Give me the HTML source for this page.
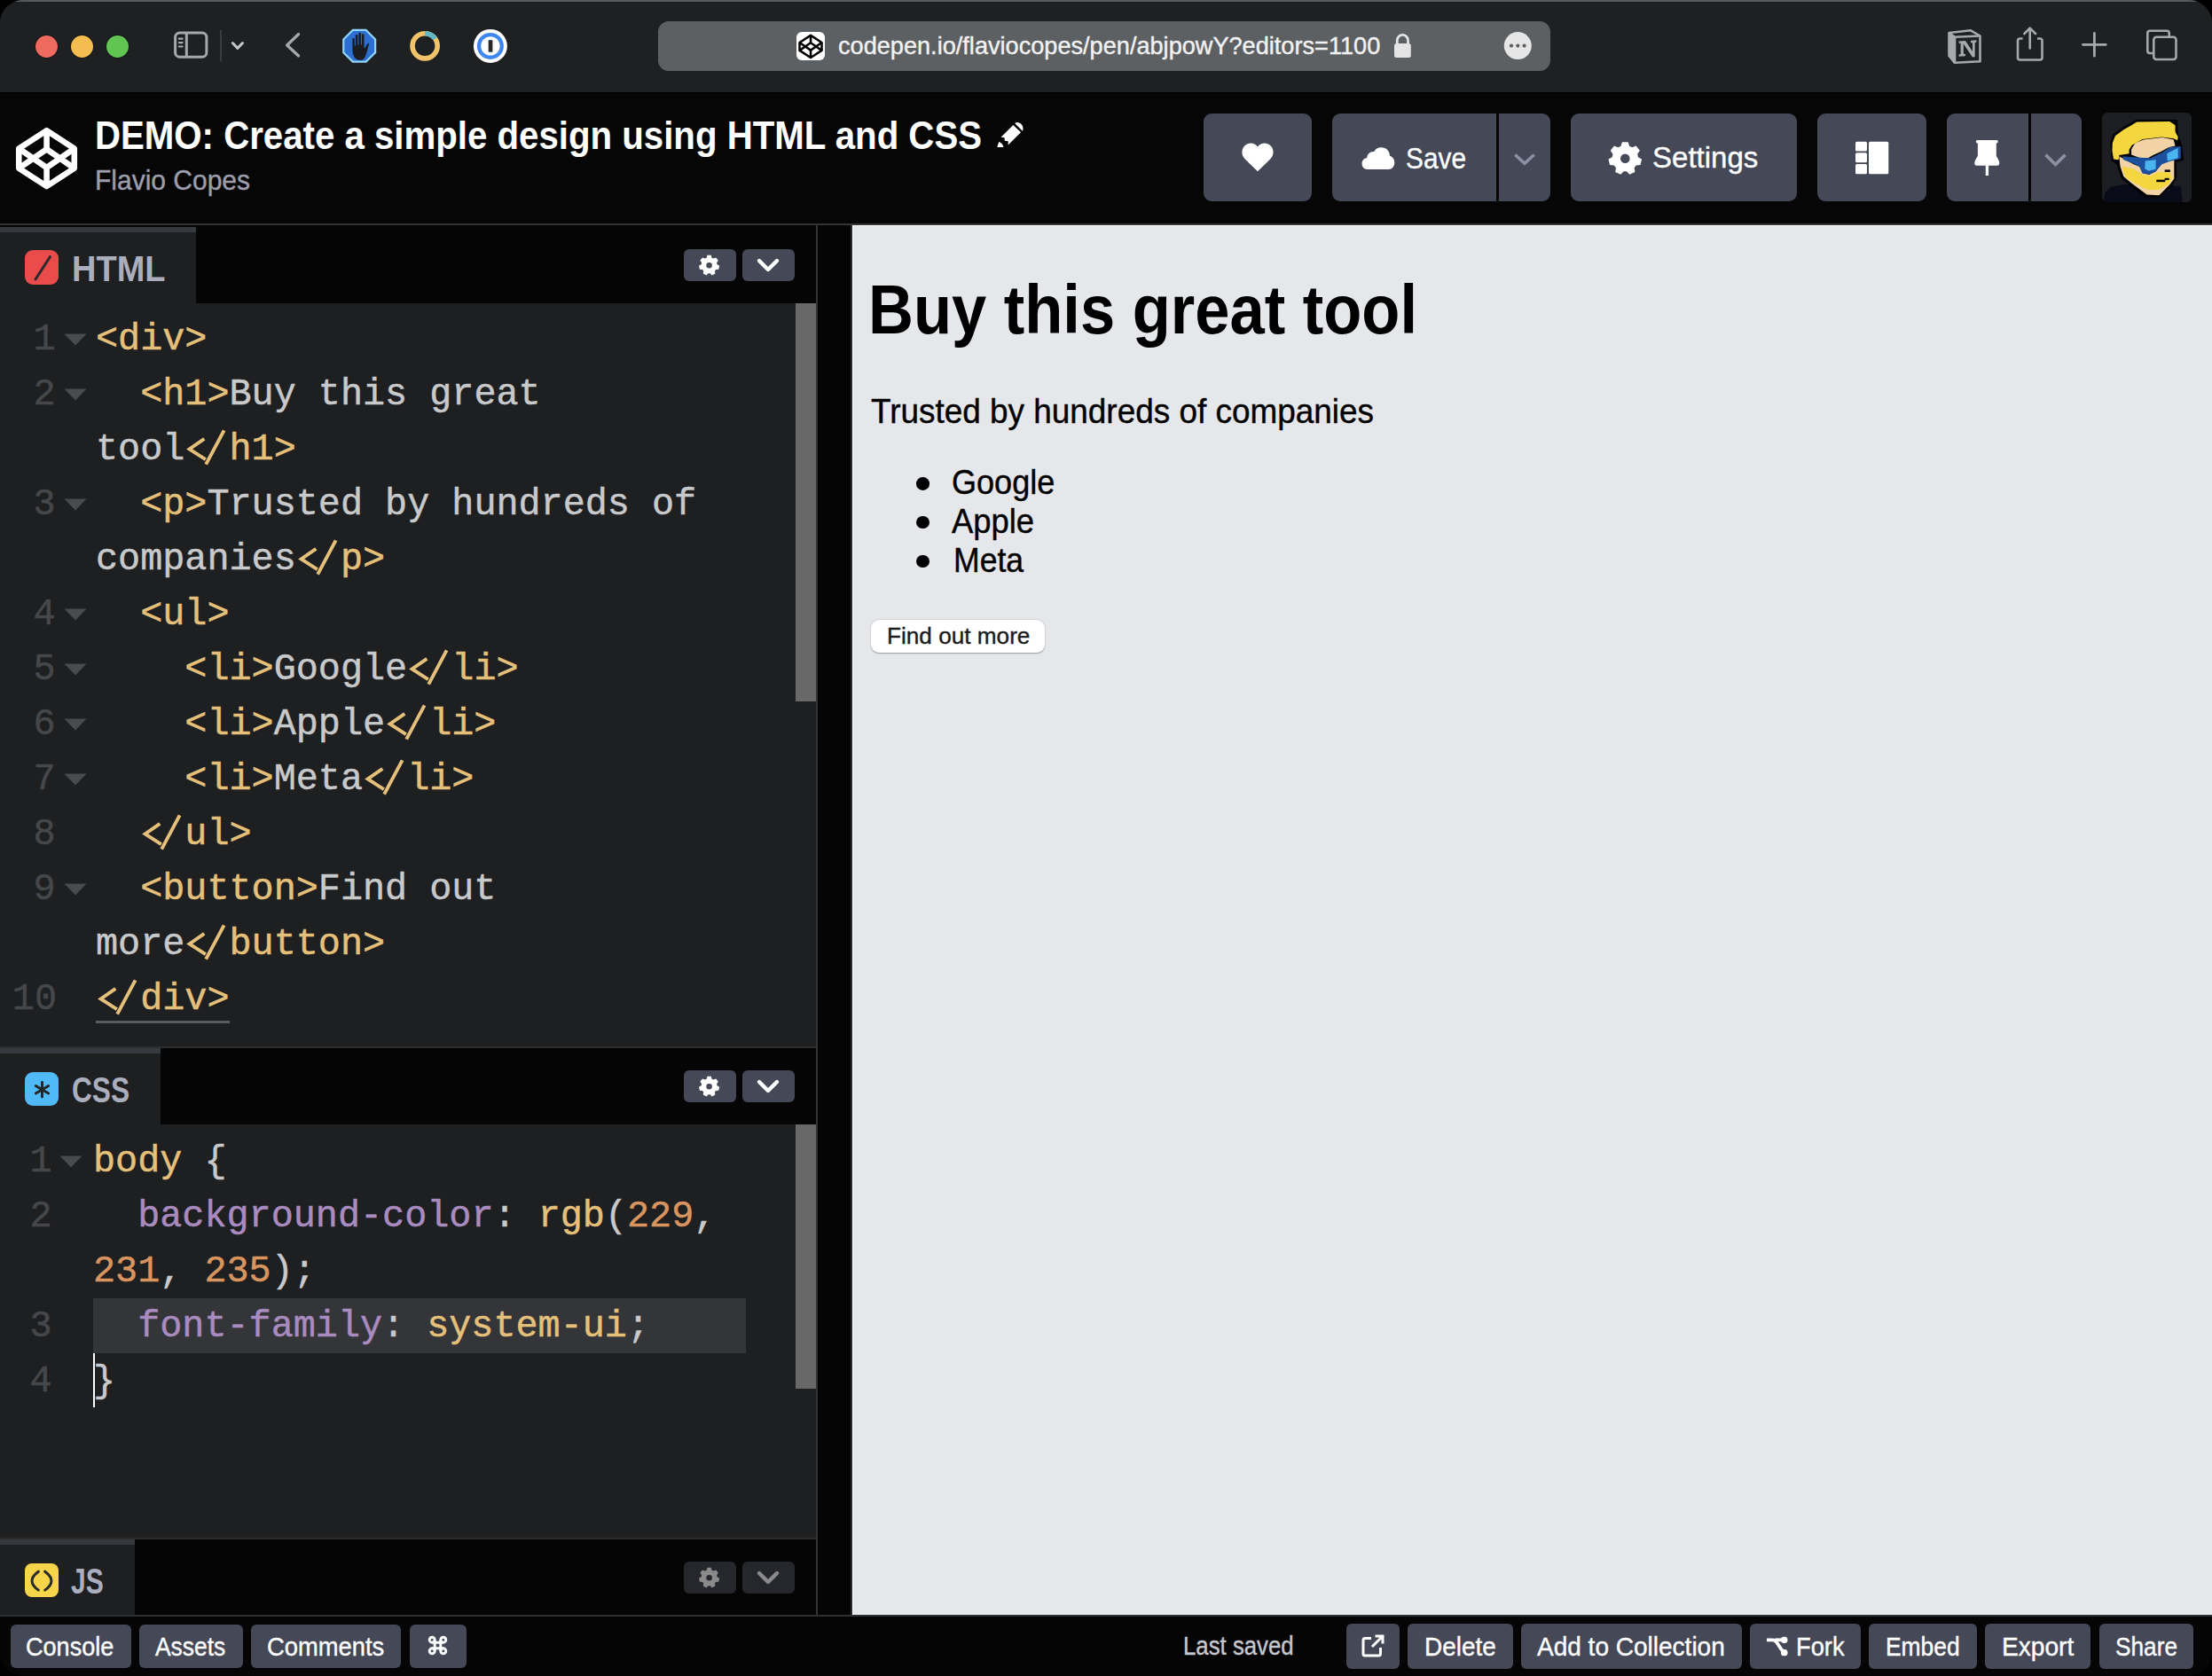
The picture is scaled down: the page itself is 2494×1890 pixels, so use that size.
<!DOCTYPE html>
<html><head><meta charset="utf-8"><title>CodePen</title>
<style>
html,body{margin:0;padding:0;background:#000;}
body{width:2494px;height:1890px;overflow:hidden;position:relative;}
#win{position:absolute;left:0;top:0;width:2494px;height:1890px;overflow:hidden;border-radius:26px;background:#050505;}
.t{position:absolute;white-space:pre;margin:0;padding:0;}
.r{position:absolute;}
.s{position:absolute;overflow:visible;}
</style></head><body><div id="win">
<div class="r" style="left:0px;top:0px;width:2494px;height:104px;background:#1f2022;border-radius:0px;"></div>
<div class="r" style="left:0px;top:0px;width:2494px;height:2px;background:#58595c;border-radius:0px;"></div>
<div class="r" style="left:39.5px;top:39.5px;width:25px;height:25px;border-radius:50%;background:#ee6a5f;box-shadow:0 0 0 1px rgba(0,0,0,.35)"></div>
<div class="r" style="left:79.5px;top:39.5px;width:25px;height:25px;border-radius:50%;background:#f5bd4f;box-shadow:0 0 0 1px rgba(0,0,0,.35)"></div>
<div class="r" style="left:119.5px;top:39.5px;width:25px;height:25px;border-radius:50%;background:#61c554;box-shadow:0 0 0 1px rgba(0,0,0,.35)"></div>
<svg class="s" style="left:190px;top:30px;" width="90" height="45" viewBox="190 30 90 45"><rect x="197.6" y="37.1" width="35.3" height="27.1" rx="5" fill="none" stroke="#a7a8aa" stroke-width="3"/><line x1="210.3" y1="37" x2="210.3" y2="64" stroke="#a7a8aa" stroke-width="3"/><g stroke="#a7a8aa" stroke-width="2.2" stroke-linecap="round"><line x1="201.8" y1="43.7" x2="205.6" y2="43.7"/><line x1="201.8" y1="48.1" x2="205.6" y2="48.1"/><line x1="201.8" y1="52.5" x2="205.6" y2="52.5"/></g><line x1="249" y1="34" x2="249" y2="69.5" stroke="#3a3b3e" stroke-width="2"/><polyline points="262.3,48.5 267.9,54.4 273.5,48.5" fill="none" stroke="#c4c5c7" stroke-width="3" stroke-linecap="round" stroke-linejoin="round"/></svg>
<svg class="s" style="left:315px;top:30px;" width="30" height="42" viewBox="315 30 30 42"><polyline points="336.6,38.5 323.6,51 336.6,63" fill="none" stroke="#a7a8aa" stroke-width="3.2" stroke-linecap="round" stroke-linejoin="round"/></svg>
<svg class="s" style="left:380px;top:28px;" width="50" height="50" viewBox="380 28 50 50"><polygon points="424.23,59.68 413.08,70.83 397.32,70.83 386.17,59.68 386.17,43.92 397.32,32.77 413.08,32.77 424.23,43.92" fill="#8fd6ff"/><polygon points="422.01,58.76 412.16,68.61 398.24,68.61 388.39,58.76 388.39,44.84 398.24,34.99 412.16,34.99 422.01,44.84" fill="#2d6fd1"/><path transform="translate(406 52) scale(1.05) translate(-400.5 -52.5)" d="M399.3 67.5 C393.6 66.3 392.3 60.5 392.3 55 L392.3 45.3 C392.3 43.6 394.6 43.6 394.6 45.3 L394.6 52 L395.6 52 L395.6 41.5 C395.6 39.8 398 39.8 398 41.5 L398 51 L399 51 L399 39.3 C399 37.6 401.4 37.6 401.4 39.3 L401.4 51 L402.4 51 L402.4 40.6 C402.4 38.9 404.8 38.9 404.8 40.6 L404.8 54.5 L406 54.5 C407 51.5 408.5 49.5 410.5 49 C408.5 55 407.5 62 405 65.5 C403.6 67.3 401.5 67.9 399.3 67.5Z" fill="#1b1c22"/></svg>
<svg class="s" style="left:458px;top:30px;" width="44" height="44" viewBox="458 30 44 44"><circle cx="479.1" cy="51.8" r="14.1" fill="none" stroke="#f2c46a" stroke-width="5.6"/><path d="M479.1 37.7 A14.1 14.1 0 0 1 490.6 43.6" fill="none" stroke="#62b7c6" stroke-width="5.6"/></svg>
<svg class="s" style="left:530px;top:30px;" width="46" height="46" viewBox="530 30 46 46"><circle cx="552.9" cy="51.9" r="19" fill="#fff"/><circle cx="552.9" cy="51.9" r="15" fill="#3e87f2"/><circle cx="552.9" cy="51.9" r="10.7" fill="#fff"/><rect x="550.7" y="45.2" width="4.7" height="13.5" fill="#2a2a2c"/></svg>
<div class="r" style="left:742px;top:24px;width:1006px;height:56px;background:#5d6062;border-radius:12px;"></div>
<div class="r" style="left:898px;top:36px;width:32px;height:32px;background:#fff;border-radius:6px;"></div>
<svg class="s" style="left:897px;top:35px;" width="34" height="34" viewBox="0 0 1676 1676"><g fill="none" stroke="#000" stroke-width="125" stroke-linejoin="round" stroke-linecap="butt"><path d="M840 240 L1455 640 L1455 1080 L840 1480 L222 1080 L222 640 Z"/><path d="M222 640 L840 1065 L1455 640"/><path d="M222 1080 L840 655 L1455 1080"/><path d="M840 240 L840 655"/><path d="M840 1065 L840 1480"/></g></svg>
<div class="t" style="left:945.0px;top:38.2px;font-size:28.1px;line-height:28.1px;font-family:'Liberation Sans', sans-serif;font-weight:400;color:#f2f2f3;transform:scaleX(0.9659);transform-origin:0 0;-webkit-text-stroke:0.4px #f2f2f3;">codepen.io/flaviocopes/pen/abjpowY?editors=1100</div>
<svg class="s" style="left:1568px;top:34px;" width="28" height="36" viewBox="1568 34 28 36"><path d="M1575.3 50 L1575.3 45.5 A6.1 6.1 0 0 1 1587.5 45.5 L1587.5 50" fill="none" stroke="#e4e4e4" stroke-width="2.8"/><rect x="1572" y="49" width="18.8" height="16" rx="2.5" fill="#e4e4e4"/></svg>
<svg class="s" style="left:1690px;top:30px;" width="44" height="44" viewBox="1690 30 44 44"><circle cx="1711.3" cy="51.6" r="15.5" fill="#e6e6e6"/><circle cx="1704" cy="51.6" r="2.1" fill="#5d6062"/><circle cx="1711.3" cy="51.6" r="2.1" fill="#5d6062"/><circle cx="1718.6" cy="51.6" r="2.1" fill="#5d6062"/></svg>
<svg class="s" style="left:2190px;top:26px;" width="300" height="52" viewBox="2190 26 300 52"><path d="M2197.5 37 L2222 34.3 L2232.5 40.5 L2232.5 69.3 L2204 70.8 L2197.5 63 Z" fill="none" stroke="#a7a8aa" stroke-width="2.6" stroke-linejoin="round"/><path d="M2197.5 37 L2204 41.8 L2232.5 40.5 M2204 41.8 L2204 70.8" fill="none" stroke="#a7a8aa" stroke-width="2.6" stroke-linejoin="round"/><path d="M2197.5 37 L2204 41.8 L2204 70.8 L2197.5 63 Z" fill="#a7a8aa"/><path d="M2208.5 46.5 L2216 46 L2224 58 L2224 48.5 L2222 48 L2222 45.7 L2228.5 45.3 L2228.5 47.6 L2226.7 48 L2226.7 64.3 L2224 64.5 L2213.8 49.5 L2213.8 60.5 L2216 61 L2216 63.3 L2208.5 63.7 L2208.5 61.4 L2210.6 61 L2210.6 48.8 L2208.5 48.8 Z" fill="#a7a8aa"/><path d="M2280.5 43.5 L2277.5 43.5 Q2275 43.5 2275 46 L2275 65 Q2275 67.5 2277.5 67.5 L2300 67.5 Q2302.5 67.5 2302.5 65 L2302.5 46 Q2302.5 43.5 2300 43.5 L2297 43.5" fill="none" stroke="#a7a8aa" stroke-width="2.6"/><path d="M2288.7 32 L2288.7 54.5 M2282.4 38 L2288.7 31.6 L2295 38" fill="none" stroke="#a7a8aa" stroke-width="2.6" stroke-linecap="round" stroke-linejoin="round"/><path d="M2361.4 37.5 L2361.4 63.2 M2348.5 50.3 L2374.3 50.3" stroke="#a7a8aa" stroke-width="2.8" stroke-linecap="round"/><path d="M2427 60 L2424 60 Q2421.3 60 2421.3 57.3 L2421.3 37.5 Q2421.3 34.8 2424 34.8 L2443 34.8 Q2445.7 34.8 2445.7 37.5 L2445.7 41.5" fill="none" stroke="#a7a8aa" stroke-width="2.6"/><rect x="2428.3" y="41.8" width="25.2" height="25.2" rx="3" fill="none" stroke="#a7a8aa" stroke-width="2.6"/></svg>
<div class="r" style="left:0px;top:104px;width:2494px;height:148px;background:#060606;border-radius:0px;"></div>
<div class="r" style="left:0px;top:104px;width:2494px;height:1px;background:#000000;border-radius:0px;"></div>
<div class="r" style="left:0px;top:252px;width:2494px;height:2px;background:#333436;border-radius:0px;"></div>
<svg class="s" style="left:10px;top:135px;" width="85" height="85" viewBox="0 0 1676 1676"><g fill="none" stroke="#fff" stroke-width="130" stroke-linejoin="round" stroke-linecap="butt"><path d="M840 240 L1455 640 L1455 1080 L840 1480 L222 1080 L222 640 Z"/><path d="M222 640 L840 1065 L1455 640"/><path d="M222 1080 L840 655 L1455 1080"/><path d="M840 240 L840 655"/><path d="M840 1065 L840 1480"/></g></svg>
<div class="t" style="left:107.0px;top:130.6px;font-size:44px;line-height:44px;font-family:'Liberation Sans', sans-serif;font-weight:700;color:#ffffff;transform:scaleX(0.9137);transform-origin:0 0;">DEMO: Create a simple design using HTML and CSS</div>
<svg class="s" style="left:1100px;top:125px;" width="70" height="55" viewBox="0 0 2133 1676"><g fill="#fff"><path d="M740 1250 L800 1060 Q930 1120 960 1250 Z"/><path d="M870 905 L1290 485 L1555 740 L1115 1170 L1120 1040 L1000 1030 L990 925 Z"/><path d="M1345 430 Q1450 360 1560 450 Q1670 560 1610 690 Z"/></g></svg>
<div class="t" style="left:107.0px;top:187.3px;font-size:32px;line-height:32px;font-family:'Liberation Sans', sans-serif;font-weight:400;color:#9c9eae;transform:scaleX(0.9371);transform-origin:0 0;-webkit-text-stroke:0.4px #9c9eae;">Flavio Copes</div>
<div class="r" style="left:1357px;top:128px;width:122px;height:99px;background:#444857;border-radius:9px;"></div>
<svg class="s" style="left:1395px;top:158px;" width="46" height="38" viewBox="0 0 46 38"><path d="M23 35.3 L9.3 22 C4 17 4.2 9.5 9.3 5.5 C13.8 2 19.8 3 23 7.5 C26.2 3 32.2 2 36.7 5.5 C41.8 9.5 42 17 36.7 22 Z" fill="#fff"/></svg>
<div class="r" style="left:1502px;top:128px;width:246px;height:99px;background:#444857;border-radius:9px;"></div>
<div class="r" style="left:1687px;top:128px;width:3px;height:99px;background:#060606;border-radius:0px;"></div>
<svg class="s" style="left:1530px;top:160px;" width="48" height="36" viewBox="0 0 48 36"><path d="M12 31 C7 31 5.6 27.5 5.6 24.3 C5.6 21 8 18.3 11.2 18 C11.5 13.5 15 10.5 19.3 11 C21 7.3 24.5 6.3 27.5 6.3 C33 6.3 37 10.5 37 16 C40.5 16.5 42.3 20 42.3 23.5 C42.3 27.5 39.5 31 35.5 31 Z" fill="#fff"/></svg>
<div class="t" style="left:1585.0px;top:160.9px;font-size:34px;line-height:34px;font-family:'Liberation Sans', sans-serif;font-weight:400;color:#ffffff;transform:scaleX(0.8774);transform-origin:0 0;-webkit-text-stroke:0.4px #ffffff;">Save</div>
<svg class="s" style="left:1700px;top:166px;" width="38" height="28" viewBox="0 0 38 28"><polyline points="8.3,8.5 19,18.3 29.7,8.5" fill="none" stroke="#8b90a3" stroke-width="3.6"/></svg>
<div class="r" style="left:1771px;top:128px;width:255px;height:99px;background:#444857;border-radius:9px;"></div>
<svg class="s" style="left:1810px;top:156px;" width="44" height="44" viewBox="0 0 44 44"><path fill-rule="evenodd" d="M17.51 8.80 L18.91 4.21 L25.69 4.21 L27.09 8.80 L30.18 10.29 L34.64 8.52 L38.87 13.82 L36.15 17.78 L36.92 21.13 L41.08 23.51 L39.57 30.12 L34.79 30.46 L32.64 33.15 L33.38 37.89 L27.27 40.83 L24.02 37.30 L20.58 37.30 L17.33 40.83 L11.22 37.89 L11.96 33.15 L9.81 30.46 L5.03 30.12 L3.52 23.51 L7.68 21.13 L8.45 17.78 L5.73 13.82 L9.96 8.52 L14.42 10.29Z M27.60 22.70 A5.3 5.3 0 1 0 17.00 22.70 A5.3 5.3 0 1 0 27.60 22.70Z" fill="#fff"/></svg>
<div class="t" style="left:1862.5px;top:160.0px;font-size:34px;line-height:34px;font-family:'Liberation Sans', sans-serif;font-weight:400;color:#ffffff;transform:scaleX(0.9711);transform-origin:0 0;-webkit-text-stroke:0.4px #ffffff;">Settings</div>
<div class="r" style="left:2049px;top:128px;width:123px;height:99px;background:#444857;border-radius:9px;"></div>
<svg class="s" style="left:2090px;top:158px;" width="42" height="40" viewBox="2090 158 42 40"><g fill="#fff"><rect x="2092" y="159.8" width="13" height="10.6" rx="1.5"/><rect x="2092" y="172.3" width="13" height="10.9" rx="1.5"/><rect x="2092" y="185" width="13" height="11.3" rx="1.5"/><rect x="2107" y="159.8" width="22.3" height="36.5" rx="1.5"/></g></svg>
<div class="r" style="left:2195px;top:128px;width:152px;height:99px;background:#444857;border-radius:9px;"></div>
<div class="r" style="left:2287px;top:128px;width:3px;height:99px;background:#060606;border-radius:0px;"></div>
<svg class="s" style="left:2220px;top:155px;" width="40" height="46" viewBox="2220 155 40 46"><path fill="#fff" d="M2229.5 158 L2251 158 Q2252.8 158 2252.8 159.8 Q2252.8 161.4 2250.8 161.8 L2250.8 175.9 Q2254.3 181 2254.3 184.3 Q2254.3 186.7 2252 186.7 L2242.1 186.7 L2242.1 198 L2238.8 198 L2238.8 186.7 L2228.5 186.7 Q2226.2 186.7 2226.2 184.3 Q2226.2 181 2229.9 175.9 L2229.9 161.8 Q2227.8 161.4 2227.8 159.8 Q2227.8 158 2229.5 158 Z"/></svg>
<svg class="s" style="left:2300px;top:166px;" width="36" height="28" viewBox="0 0 36 28"><polyline points="6.5,8.6 17.5,19.5 28.5,8.6" fill="none" stroke="#8b90a3" stroke-width="3.6"/></svg>
<svg class="s" style="left:2368px;top:125px;" width="105" height="105" viewBox="0 0 1676 1676"><rect x="32" y="32" width="1612" height="1612" rx="90" fill="#1d1e23"/><polygon fill="#0a0b18" points="60,1645 80,1480 190,1370 460,1320 580,1330 850,1500 1060,1500 1230,1320 1450,1370 1480,1645"/><polygon fill="#000" points="180,560 230,420 400,300 640,160 1390,160 1400,420 1470,620 1500,880 1370,920 1370,1220 1280,1360 1060,1560 820,1560 540,1350 380,1220 300,960 200,900"/><polygon fill="#f2d3a5" points="340,820 600,960 720,1010 760,1120 880,1150 1000,1090 1120,900 1330,880 1330,1220 1250,1330 1060,1520 840,1510 560,1300 420,1180 360,1000"/><polygon fill="#f4d63e" points="390,1000 600,1040 760,1150 900,1170 1050,1100 1250,1110 1300,1200 1230,1320 1050,1420 850,1420 620,1300 450,1190"/><polygon fill="#f2d3a5" points="560,690 630,580 780,520 1120,480 1320,520 1350,630 1230,660 1100,730 950,800 860,850 720,850 560,790"/><polygon fill="#f4d63e" points="220,580 270,450 420,340 540,270 660,200 1250,190 1350,260 1350,380 1400,470 1390,530 1320,500 1110,470 760,510 570,620 520,700 520,770 340,800 330,880 240,870 215,720"/><polygon fill="#1c4f9c" points="400,820 720,840 900,850 1100,760 1260,650 1450,640 1450,860 1250,910 1110,960 1000,1090 880,1140 760,1120 700,1000 600,950 420,880"/><polygon fill="#4bb5f1" points="810,900 1000,880 1000,1050 870,1080 800,1040"/><polygon fill="#4bb5f1" points="1200,770 1400,665 1400,850 1210,900"/><g fill="#000"><rect x="1160" y="1060" width="100" height="40"/><rect x="1010" y="1240" width="160" height="40"/><rect x="1160" y="1210" width="80" height="35"/></g></svg>
<div class="r" style="left:0px;top:254px;width:920px;height:1567px;background:#050505;border-radius:0px;"></div>
<div class="r" style="left:920px;top:254px;width:2px;height:1567px;background:#333436;border-radius:0px;"></div>
<div class="r" style="left:922px;top:254px;width:37px;height:1567px;background:#050505;border-radius:0px;"></div>
<div class="r" style="left:0px;top:256px;width:221px;height:6px;background:#363a3e;border-radius:0px;"></div>
<div class="r" style="left:0px;top:262px;width:221px;height:80px;background:#1e1f21;border-radius:0px;"></div>
<div class="r" style="left:0px;top:342px;width:920px;height:838px;background:#1e1f21;border-radius:0px;"></div>
<div class="r" style="left:897px;top:342px;width:23px;height:449px;background:#686868;border-radius:0px;"></div>
<div class="r" style="left:28px;top:282px;width:38px;height:39px;background:#ea4c4c;border-radius:9px;"></div>
<svg class="s" style="left:28px;top:282px;" width="38" height="39" viewBox="0 0 38 39"><line x1="28.5" y1="7.5" x2="12" y2="33" stroke="#2a2a2a" stroke-width="3" stroke-linecap="round"/></svg>
<div class="t" style="left:81.0px;top:283.2px;font-size:41.3px;line-height:41.3px;font-family:'Liberation Sans', sans-serif;font-weight:700;color:#abaebd;transform:scaleX(0.9199);transform-origin:0 0;">HTML</div>
<div class="r" style="left:771px;top:281px;width:59px;height:36px;background:#444857;border-radius:6px;"></div><div class="r" style="left:837px;top:281px;width:59px;height:36px;background:#444857;border-radius:6px;"></div><svg class="s" style="left:771px;top:281px;" width="59" height="36" viewBox="0 0 59 36"><path fill-rule="evenodd" d="M25.67 9.69 L26.51 6.79 L30.69 6.79 L31.53 9.69 L33.43 10.60 L36.21 9.45 L38.83 12.72 L37.08 15.19 L37.55 17.24 L40.19 18.70 L39.26 22.78 L36.24 22.95 L34.93 24.60 L35.44 27.57 L31.66 29.39 L29.65 27.14 L27.55 27.14 L25.54 29.39 L21.76 27.57 L22.27 24.60 L20.96 22.95 L17.94 22.78 L17.01 18.70 L19.65 17.24 L20.12 15.19 L18.37 12.72 L20.99 9.45 L23.77 10.60Z M31.90 18.20 A3.3 3.3 0 1 0 25.30 18.20 A3.3 3.3 0 1 0 31.90 18.20Z" fill="#fff"/></svg><svg class="s" style="left:837px;top:281px;" width="59" height="36" viewBox="0 0 59 36"><polyline points="19,13 29,23 39,13" fill="none" stroke="#fff" stroke-width="4.4" stroke-linecap="round" stroke-linejoin="round"/></svg>
<div class="t" style="left:37.4px;top:363.0px;font-size:41.8px;line-height:41.8px;font-family:'Liberation Mono', monospace;font-weight:400;color:#46474a;-webkit-text-stroke:0.5px #46474a;">1</div>
<svg class="s" style="left:72px;top:376px;" width="26" height="14" viewBox="0 0 26 14"><polygon points="0.5,0.5 25.5,0.5 13,13.5" fill="#4a4b4e"/></svg>
<div class="t" style="left:108.0px;top:363.0px;font-size:41.8px;line-height:41.8px;font-family:'Liberation Mono', monospace;font-weight:400;color:#e5c07b;-webkit-text-stroke:0.5px #e5c07b;">&lt;div&gt;</div>
<div class="t" style="left:37.4px;top:425.0px;font-size:41.8px;line-height:41.8px;font-family:'Liberation Mono', monospace;font-weight:400;color:#46474a;-webkit-text-stroke:0.5px #46474a;">2</div>
<svg class="s" style="left:72px;top:438px;" width="26" height="14" viewBox="0 0 26 14"><polygon points="0.5,0.5 25.5,0.5 13,13.5" fill="#4a4b4e"/></svg>
<div class="t" style="left:158.2px;top:425.0px;font-size:41.8px;line-height:41.8px;font-family:'Liberation Mono', monospace;font-weight:400;color:#e5c07b;-webkit-text-stroke:0.5px #e5c07b;">&lt;h1&gt;</div><div class="t" style="left:258.5px;top:425.0px;font-size:41.8px;line-height:41.8px;font-family:'Liberation Mono', monospace;font-weight:400;color:#c8c9cb;-webkit-text-stroke:0.5px #c8c9cb;">Buy this great</div>
<div class="t" style="left:108.0px;top:487.0px;font-size:41.8px;line-height:41.8px;font-family:'Liberation Mono', monospace;font-weight:400;color:#c8c9cb;-webkit-text-stroke:0.5px #c8c9cb;">tool</div><svg class="s" style="left:208.3px;top:479px;" width="52" height="50" viewBox="0 0 52 50"><g fill="none" stroke="#e5c07b" stroke-width="3.9" stroke-linecap="butt" stroke-linejoin="miter"><polyline points="22.3,15.8 5.6,27.5 23.8,39.2"/><line x1="44.6" y1="6.3" x2="24.2" y2="44.7"/></g></svg><div class="t" style="left:258.5px;top:487.0px;font-size:41.8px;line-height:41.8px;font-family:'Liberation Mono', monospace;font-weight:400;color:#e5c07b;-webkit-text-stroke:0.5px #e5c07b;">h1&gt;</div>
<div class="t" style="left:37.4px;top:549.0px;font-size:41.8px;line-height:41.8px;font-family:'Liberation Mono', monospace;font-weight:400;color:#46474a;-webkit-text-stroke:0.5px #46474a;">3</div>
<svg class="s" style="left:72px;top:562px;" width="26" height="14" viewBox="0 0 26 14"><polygon points="0.5,0.5 25.5,0.5 13,13.5" fill="#4a4b4e"/></svg>
<div class="t" style="left:158.2px;top:549.0px;font-size:41.8px;line-height:41.8px;font-family:'Liberation Mono', monospace;font-weight:400;color:#e5c07b;-webkit-text-stroke:0.5px #e5c07b;">&lt;p&gt;</div><div class="t" style="left:233.4px;top:549.0px;font-size:41.8px;line-height:41.8px;font-family:'Liberation Mono', monospace;font-weight:400;color:#c8c9cb;-webkit-text-stroke:0.5px #c8c9cb;">Trusted by hundreds of</div>
<div class="t" style="left:108.0px;top:611.0px;font-size:41.8px;line-height:41.8px;font-family:'Liberation Mono', monospace;font-weight:400;color:#c8c9cb;-webkit-text-stroke:0.5px #c8c9cb;">companies</div><svg class="s" style="left:333.7px;top:603px;" width="52" height="50" viewBox="0 0 52 50"><g fill="none" stroke="#e5c07b" stroke-width="3.9" stroke-linecap="butt" stroke-linejoin="miter"><polyline points="22.3,15.8 5.6,27.5 23.8,39.2"/><line x1="44.6" y1="6.3" x2="24.2" y2="44.7"/></g></svg><div class="t" style="left:383.9px;top:611.0px;font-size:41.8px;line-height:41.8px;font-family:'Liberation Mono', monospace;font-weight:400;color:#e5c07b;-webkit-text-stroke:0.5px #e5c07b;">p&gt;</div>
<div class="t" style="left:37.4px;top:673.0px;font-size:41.8px;line-height:41.8px;font-family:'Liberation Mono', monospace;font-weight:400;color:#46474a;-webkit-text-stroke:0.5px #46474a;">4</div>
<svg class="s" style="left:72px;top:686px;" width="26" height="14" viewBox="0 0 26 14"><polygon points="0.5,0.5 25.5,0.5 13,13.5" fill="#4a4b4e"/></svg>
<div class="t" style="left:158.2px;top:673.0px;font-size:41.8px;line-height:41.8px;font-family:'Liberation Mono', monospace;font-weight:400;color:#e5c07b;-webkit-text-stroke:0.5px #e5c07b;">&lt;ul&gt;</div>
<div class="t" style="left:37.4px;top:735.0px;font-size:41.8px;line-height:41.8px;font-family:'Liberation Mono', monospace;font-weight:400;color:#46474a;-webkit-text-stroke:0.5px #46474a;">5</div>
<svg class="s" style="left:72px;top:748px;" width="26" height="14" viewBox="0 0 26 14"><polygon points="0.5,0.5 25.5,0.5 13,13.5" fill="#4a4b4e"/></svg>
<div class="t" style="left:208.3px;top:735.0px;font-size:41.8px;line-height:41.8px;font-family:'Liberation Mono', monospace;font-weight:400;color:#e5c07b;-webkit-text-stroke:0.5px #e5c07b;">&lt;li&gt;</div><div class="t" style="left:308.7px;top:735.0px;font-size:41.8px;line-height:41.8px;font-family:'Liberation Mono', monospace;font-weight:400;color:#c8c9cb;-webkit-text-stroke:0.5px #c8c9cb;">Google</div><svg class="s" style="left:459.2px;top:727px;" width="52" height="50" viewBox="0 0 52 50"><g fill="none" stroke="#e5c07b" stroke-width="3.9" stroke-linecap="butt" stroke-linejoin="miter"><polyline points="22.3,15.8 5.6,27.5 23.8,39.2"/><line x1="44.6" y1="6.3" x2="24.2" y2="44.7"/></g></svg><div class="t" style="left:509.3px;top:735.0px;font-size:41.8px;line-height:41.8px;font-family:'Liberation Mono', monospace;font-weight:400;color:#e5c07b;-webkit-text-stroke:0.5px #e5c07b;">li&gt;</div>
<div class="t" style="left:37.4px;top:797.0px;font-size:41.8px;line-height:41.8px;font-family:'Liberation Mono', monospace;font-weight:400;color:#46474a;-webkit-text-stroke:0.5px #46474a;">6</div>
<svg class="s" style="left:72px;top:810px;" width="26" height="14" viewBox="0 0 26 14"><polygon points="0.5,0.5 25.5,0.5 13,13.5" fill="#4a4b4e"/></svg>
<div class="t" style="left:208.3px;top:797.0px;font-size:41.8px;line-height:41.8px;font-family:'Liberation Mono', monospace;font-weight:400;color:#e5c07b;-webkit-text-stroke:0.5px #e5c07b;">&lt;li&gt;</div><div class="t" style="left:308.7px;top:797.0px;font-size:41.8px;line-height:41.8px;font-family:'Liberation Mono', monospace;font-weight:400;color:#c8c9cb;-webkit-text-stroke:0.5px #c8c9cb;">Apple</div><svg class="s" style="left:434.1px;top:789px;" width="52" height="50" viewBox="0 0 52 50"><g fill="none" stroke="#e5c07b" stroke-width="3.9" stroke-linecap="butt" stroke-linejoin="miter"><polyline points="22.3,15.8 5.6,27.5 23.8,39.2"/><line x1="44.6" y1="6.3" x2="24.2" y2="44.7"/></g></svg><div class="t" style="left:484.2px;top:797.0px;font-size:41.8px;line-height:41.8px;font-family:'Liberation Mono', monospace;font-weight:400;color:#e5c07b;-webkit-text-stroke:0.5px #e5c07b;">li&gt;</div>
<div class="t" style="left:37.4px;top:859.0px;font-size:41.8px;line-height:41.8px;font-family:'Liberation Mono', monospace;font-weight:400;color:#46474a;-webkit-text-stroke:0.5px #46474a;">7</div>
<svg class="s" style="left:72px;top:872px;" width="26" height="14" viewBox="0 0 26 14"><polygon points="0.5,0.5 25.5,0.5 13,13.5" fill="#4a4b4e"/></svg>
<div class="t" style="left:208.3px;top:859.0px;font-size:41.8px;line-height:41.8px;font-family:'Liberation Mono', monospace;font-weight:400;color:#e5c07b;-webkit-text-stroke:0.5px #e5c07b;">&lt;li&gt;</div><div class="t" style="left:308.7px;top:859.0px;font-size:41.8px;line-height:41.8px;font-family:'Liberation Mono', monospace;font-weight:400;color:#c8c9cb;-webkit-text-stroke:0.5px #c8c9cb;">Meta</div><svg class="s" style="left:409.0px;top:851px;" width="52" height="50" viewBox="0 0 52 50"><g fill="none" stroke="#e5c07b" stroke-width="3.9" stroke-linecap="butt" stroke-linejoin="miter"><polyline points="22.3,15.8 5.6,27.5 23.8,39.2"/><line x1="44.6" y1="6.3" x2="24.2" y2="44.7"/></g></svg><div class="t" style="left:459.2px;top:859.0px;font-size:41.8px;line-height:41.8px;font-family:'Liberation Mono', monospace;font-weight:400;color:#e5c07b;-webkit-text-stroke:0.5px #e5c07b;">li&gt;</div>
<div class="t" style="left:37.4px;top:921.0px;font-size:41.8px;line-height:41.8px;font-family:'Liberation Mono', monospace;font-weight:400;color:#46474a;-webkit-text-stroke:0.5px #46474a;">8</div>
<svg class="s" style="left:158.2px;top:913px;" width="52" height="50" viewBox="0 0 52 50"><g fill="none" stroke="#e5c07b" stroke-width="3.9" stroke-linecap="butt" stroke-linejoin="miter"><polyline points="22.3,15.8 5.6,27.5 23.8,39.2"/><line x1="44.6" y1="6.3" x2="24.2" y2="44.7"/></g></svg><div class="t" style="left:208.3px;top:921.0px;font-size:41.8px;line-height:41.8px;font-family:'Liberation Mono', monospace;font-weight:400;color:#e5c07b;-webkit-text-stroke:0.5px #e5c07b;">ul&gt;</div>
<div class="t" style="left:37.4px;top:983.0px;font-size:41.8px;line-height:41.8px;font-family:'Liberation Mono', monospace;font-weight:400;color:#46474a;-webkit-text-stroke:0.5px #46474a;">9</div>
<svg class="s" style="left:72px;top:996px;" width="26" height="14" viewBox="0 0 26 14"><polygon points="0.5,0.5 25.5,0.5 13,13.5" fill="#4a4b4e"/></svg>
<div class="t" style="left:158.2px;top:983.0px;font-size:41.8px;line-height:41.8px;font-family:'Liberation Mono', monospace;font-weight:400;color:#e5c07b;-webkit-text-stroke:0.5px #e5c07b;">&lt;button&gt;</div><div class="t" style="left:358.8px;top:983.0px;font-size:41.8px;line-height:41.8px;font-family:'Liberation Mono', monospace;font-weight:400;color:#c8c9cb;-webkit-text-stroke:0.5px #c8c9cb;">Find out</div>
<div class="t" style="left:108.0px;top:1045.0px;font-size:41.8px;line-height:41.8px;font-family:'Liberation Mono', monospace;font-weight:400;color:#c8c9cb;-webkit-text-stroke:0.5px #c8c9cb;">more</div><svg class="s" style="left:208.3px;top:1037px;" width="52" height="50" viewBox="0 0 52 50"><g fill="none" stroke="#e5c07b" stroke-width="3.9" stroke-linecap="butt" stroke-linejoin="miter"><polyline points="22.3,15.8 5.6,27.5 23.8,39.2"/><line x1="44.6" y1="6.3" x2="24.2" y2="44.7"/></g></svg><div class="t" style="left:258.5px;top:1045.0px;font-size:41.8px;line-height:41.8px;font-family:'Liberation Mono', monospace;font-weight:400;color:#e5c07b;-webkit-text-stroke:0.5px #e5c07b;">button&gt;</div>
<div class="t" style="left:13.8px;top:1107.0px;font-size:41.8px;line-height:41.8px;font-family:'Liberation Mono', monospace;font-weight:400;color:#46474a;-webkit-text-stroke:0.5px #46474a;">10</div>
<svg class="s" style="left:108.0px;top:1099px;" width="52" height="50" viewBox="0 0 52 50"><g fill="none" stroke="#e5c07b" stroke-width="3.9" stroke-linecap="butt" stroke-linejoin="miter"><polyline points="22.3,15.8 5.6,27.5 23.8,39.2"/><line x1="44.6" y1="6.3" x2="24.2" y2="44.7"/></g></svg><div class="t" style="left:158.2px;top:1107.0px;font-size:41.8px;line-height:41.8px;font-family:'Liberation Mono', monospace;font-weight:400;color:#e5c07b;-webkit-text-stroke:0.5px #e5c07b;">div&gt;</div>
<div class="r" style="left:108px;top:1151px;width:151px;height:3px;background:#5b5c60;border-radius:0px;"></div>
<div class="r" style="left:0px;top:1180px;width:920px;height:2px;background:#2d2d2e;border-radius:0px;"></div>
<div class="r" style="left:0px;top:1182px;width:181px;height:6px;background:#363a3e;border-radius:0px;"></div>
<div class="r" style="left:0px;top:1188px;width:181px;height:80px;background:#1e1f21;border-radius:0px;"></div>
<div class="r" style="left:0px;top:1268px;width:920px;height:466px;background:#1e1f21;border-radius:0px;"></div>
<div class="r" style="left:897px;top:1268px;width:23px;height:298px;background:#686868;border-radius:0px;"></div>
<div class="r" style="left:28px;top:1209px;width:38px;height:38px;background:#50b9f7;border-radius:9px;"></div>
<svg class="s" style="left:28px;top:1209px;" width="38" height="38" viewBox="0 0 38 38"><g stroke="#232323" stroke-width="2.9" stroke-linecap="round"><line x1="19.5" y1="11.5" x2="19.5" y2="28"/><line x1="12.3" y1="15.6" x2="26.7" y2="23.9"/><line x1="12.3" y1="23.9" x2="26.7" y2="15.6"/></g></svg>
<div class="t" style="left:80.5px;top:1208.7px;font-size:41.3px;line-height:41.3px;font-family:'Liberation Sans', sans-serif;font-weight:700;color:#abaebd;transform:scaleX(0.7666);transform-origin:0 0;">CSS</div>
<div class="r" style="left:771px;top:1207px;width:59px;height:36px;background:#444857;border-radius:6px;"></div><div class="r" style="left:837px;top:1207px;width:59px;height:36px;background:#444857;border-radius:6px;"></div><svg class="s" style="left:771px;top:1207px;" width="59" height="36" viewBox="0 0 59 36"><path fill-rule="evenodd" d="M25.67 9.69 L26.51 6.79 L30.69 6.79 L31.53 9.69 L33.43 10.60 L36.21 9.45 L38.83 12.72 L37.08 15.19 L37.55 17.24 L40.19 18.70 L39.26 22.78 L36.24 22.95 L34.93 24.60 L35.44 27.57 L31.66 29.39 L29.65 27.14 L27.55 27.14 L25.54 29.39 L21.76 27.57 L22.27 24.60 L20.96 22.95 L17.94 22.78 L17.01 18.70 L19.65 17.24 L20.12 15.19 L18.37 12.72 L20.99 9.45 L23.77 10.60Z M31.90 18.20 A3.3 3.3 0 1 0 25.30 18.20 A3.3 3.3 0 1 0 31.90 18.20Z" fill="#fff"/></svg><svg class="s" style="left:837px;top:1207px;" width="59" height="36" viewBox="0 0 59 36"><polyline points="19,13 29,23 39,13" fill="none" stroke="#fff" stroke-width="4.4" stroke-linecap="round" stroke-linejoin="round"/></svg>
<div class="r" style="left:105px;top:1464px;width:736px;height:62px;background:#333538;border-radius:0px;"></div>
<div class="t" style="left:33.4px;top:1289.5px;font-size:41.8px;line-height:41.8px;font-family:'Liberation Mono', monospace;font-weight:400;color:#46474a;-webkit-text-stroke:0.5px #46474a;">1</div>
<svg class="s" style="left:67px;top:1302.5px;" width="26" height="14" viewBox="0 0 26 14"><polygon points="0.5,0.5 25.5,0.5 13,13.5" fill="#4a4b4e"/></svg>
<div class="t" style="left:105.0px;top:1289.5px;font-size:41.8px;line-height:41.8px;font-family:'Liberation Mono', monospace;font-weight:400;color:#e5c07b;-webkit-text-stroke:0.5px #e5c07b;">body</div><div class="t" style="left:205.3px;top:1289.5px;font-size:41.8px;line-height:41.8px;font-family:'Liberation Mono', monospace;font-weight:400;color:#c8c9cb;-webkit-text-stroke:0.5px #c8c9cb;"> {</div>
<div class="t" style="left:33.4px;top:1351.5px;font-size:41.8px;line-height:41.8px;font-family:'Liberation Mono', monospace;font-weight:400;color:#46474a;-webkit-text-stroke:0.5px #46474a;">2</div>
<div class="t" style="left:155.2px;top:1351.5px;font-size:41.8px;line-height:41.8px;font-family:'Liberation Mono', monospace;font-weight:400;color:#a98bc0;-webkit-text-stroke:0.5px #a98bc0;">background-color</div><div class="t" style="left:556.5px;top:1351.5px;font-size:41.8px;line-height:41.8px;font-family:'Liberation Mono', monospace;font-weight:400;color:#c8c9cb;-webkit-text-stroke:0.5px #c8c9cb;">:</div><div class="t" style="left:606.7px;top:1351.5px;font-size:41.8px;line-height:41.8px;font-family:'Liberation Mono', monospace;font-weight:400;color:#e5c07b;-webkit-text-stroke:0.5px #e5c07b;">rgb</div><div class="t" style="left:681.9px;top:1351.5px;font-size:41.8px;line-height:41.8px;font-family:'Liberation Mono', monospace;font-weight:400;color:#c8c9cb;-webkit-text-stroke:0.5px #c8c9cb;">(</div><div class="t" style="left:707.0px;top:1351.5px;font-size:41.8px;line-height:41.8px;font-family:'Liberation Mono', monospace;font-weight:400;color:#d9955f;-webkit-text-stroke:0.5px #d9955f;">229</div><div class="t" style="left:782.2px;top:1351.5px;font-size:41.8px;line-height:41.8px;font-family:'Liberation Mono', monospace;font-weight:400;color:#c8c9cb;-webkit-text-stroke:0.5px #c8c9cb;">,</div>
<div class="t" style="left:105.0px;top:1413.5px;font-size:41.8px;line-height:41.8px;font-family:'Liberation Mono', monospace;font-weight:400;color:#d9955f;-webkit-text-stroke:0.5px #d9955f;">231</div><div class="t" style="left:180.2px;top:1413.5px;font-size:41.8px;line-height:41.8px;font-family:'Liberation Mono', monospace;font-weight:400;color:#c8c9cb;-webkit-text-stroke:0.5px #c8c9cb;">, </div><div class="t" style="left:230.4px;top:1413.5px;font-size:41.8px;line-height:41.8px;font-family:'Liberation Mono', monospace;font-weight:400;color:#d9955f;-webkit-text-stroke:0.5px #d9955f;">235</div><div class="t" style="left:305.7px;top:1413.5px;font-size:41.8px;line-height:41.8px;font-family:'Liberation Mono', monospace;font-weight:400;color:#c8c9cb;-webkit-text-stroke:0.5px #c8c9cb;">);</div>
<div class="t" style="left:33.4px;top:1475.5px;font-size:41.8px;line-height:41.8px;font-family:'Liberation Mono', monospace;font-weight:400;color:#46474a;-webkit-text-stroke:0.5px #46474a;">3</div>
<div class="t" style="left:155.2px;top:1475.5px;font-size:41.8px;line-height:41.8px;font-family:'Liberation Mono', monospace;font-weight:400;color:#a98bc0;-webkit-text-stroke:0.5px #a98bc0;">font-family</div><div class="t" style="left:431.1px;top:1475.5px;font-size:41.8px;line-height:41.8px;font-family:'Liberation Mono', monospace;font-weight:400;color:#c8c9cb;-webkit-text-stroke:0.5px #c8c9cb;">:</div><div class="t" style="left:481.2px;top:1475.5px;font-size:41.8px;line-height:41.8px;font-family:'Liberation Mono', monospace;font-weight:400;color:#e5c07b;-webkit-text-stroke:0.5px #e5c07b;">system-ui</div><div class="t" style="left:707.0px;top:1475.5px;font-size:41.8px;line-height:41.8px;font-family:'Liberation Mono', monospace;font-weight:400;color:#c8c9cb;-webkit-text-stroke:0.5px #c8c9cb;">;</div>
<div class="t" style="left:33.4px;top:1537.5px;font-size:41.8px;line-height:41.8px;font-family:'Liberation Mono', monospace;font-weight:400;color:#46474a;-webkit-text-stroke:0.5px #46474a;">4</div>
<div class="t" style="left:105.0px;top:1537.5px;font-size:41.8px;line-height:41.8px;font-family:'Liberation Mono', monospace;font-weight:400;color:#c8c9cb;-webkit-text-stroke:0.5px #c8c9cb;">}</div>
<div class="r" style="left:105px;top:1526px;width:2px;height:61px;background:#ffffff;border-radius:0px;"></div>
<div class="r" style="left:0px;top:1734px;width:920px;height:2px;background:#2d2d2e;border-radius:0px;"></div>
<div class="r" style="left:0px;top:1736px;width:152px;height:6px;background:#363a3e;border-radius:0px;"></div>
<div class="r" style="left:0px;top:1742px;width:152px;height:79px;background:#1e1f21;border-radius:0px;"></div>
<div class="r" style="left:28px;top:1763px;width:38px;height:38px;background:#f7d54a;border-radius:8px;"></div>
<svg class="s" style="left:28px;top:1763px;" width="38" height="38" viewBox="0 0 38 38"><g fill="none" stroke="#2a2a2a" stroke-width="3" stroke-linecap="round"><path d="M15.3 9.2 Q0.8 19.6 15.3 30.1"/><path d="M22.7 9.2 Q37.2 19.6 22.7 30.1"/></g></svg>
<div class="t" style="left:80.0px;top:1763.3px;font-size:41.3px;line-height:41.3px;font-family:'Liberation Sans', sans-serif;font-weight:700;color:#abaebd;transform:scaleX(0.7284);transform-origin:0 0;">JS</div>
<div class="r" style="left:771px;top:1761px;width:59px;height:36px;background:#25272d;border-radius:6px;"></div><div class="r" style="left:837px;top:1761px;width:59px;height:36px;background:#25272d;border-radius:6px;"></div><svg class="s" style="left:771px;top:1761px;" width="59" height="36" viewBox="0 0 59 36"><path fill-rule="evenodd" d="M25.67 9.69 L26.51 6.79 L30.69 6.79 L31.53 9.69 L33.43 10.60 L36.21 9.45 L38.83 12.72 L37.08 15.19 L37.55 17.24 L40.19 18.70 L39.26 22.78 L36.24 22.95 L34.93 24.60 L35.44 27.57 L31.66 29.39 L29.65 27.14 L27.55 27.14 L25.54 29.39 L21.76 27.57 L22.27 24.60 L20.96 22.95 L17.94 22.78 L17.01 18.70 L19.65 17.24 L20.12 15.19 L18.37 12.72 L20.99 9.45 L23.77 10.60Z M31.90 18.20 A3.3 3.3 0 1 0 25.30 18.20 A3.3 3.3 0 1 0 31.90 18.20Z" fill="#8a8a8a"/></svg><svg class="s" style="left:837px;top:1761px;" width="59" height="36" viewBox="0 0 59 36"><polyline points="19,13 29,23 39,13" fill="none" stroke="#8a8a8a" stroke-width="4.4" stroke-linecap="round" stroke-linejoin="round"/></svg>
<div class="r" style="left:959px;top:254px;width:2px;height:1567px;background:#2a2b2d;border-radius:0px;"></div>
<div class="r" style="left:961px;top:254px;width:1533px;height:1567px;background:#ffffff;border-radius:0px;"></div>
<div class="r" style="left:962px;top:255px;width:1532px;height:1566px;background:#e5e7eb;border-radius:0px;"></div>
<div class="t" style="left:978.8px;top:310.8px;font-size:77px;line-height:77px;font-family:'Liberation Sans', sans-serif;font-weight:700;color:#000;transform:scaleX(0.9158);transform-origin:0 0;">Buy this great tool</div>
<div class="t" style="left:981.5px;top:445.0px;font-size:38.3px;line-height:38.3px;font-family:'Liberation Sans', sans-serif;font-weight:400;color:#000;transform:scaleX(0.9638);transform-origin:0 0;-webkit-text-stroke:0.4px #000;">Trusted by hundreds of companies</div>
<div class="r" style="left:1033px;top:538.1px;width:14.6px;height:14.6px;border-radius:50%;background:#000"></div>
<div class="r" style="left:1033px;top:581.9px;width:14.6px;height:14.6px;border-radius:50%;background:#000"></div>
<div class="r" style="left:1033px;top:625.7px;width:14.6px;height:14.6px;border-radius:50%;background:#000"></div>
<div class="t" style="left:1073.0px;top:524.6px;font-size:38.3px;line-height:38.3px;font-family:'Liberation Sans', sans-serif;font-weight:400;color:#000;transform:scaleX(0.9417);transform-origin:0 0;-webkit-text-stroke:0.4px #000;">Google</div>
<div class="t" style="left:1073.2px;top:569.2px;font-size:38.3px;line-height:38.3px;font-family:'Liberation Sans', sans-serif;font-weight:400;color:#000;transform:scaleX(0.9504);transform-origin:0 0;-webkit-text-stroke:0.4px #000;">Apple</div>
<div class="t" style="left:1074.5px;top:612.6px;font-size:38.3px;line-height:38.3px;font-family:'Liberation Sans', sans-serif;font-weight:400;color:#000;transform:scaleX(0.9290);transform-origin:0 0;-webkit-text-stroke:0.4px #000;">Meta</div>
<div class="r" style="left:982px;top:699px;width:196px;height:37px;background:#ffffff;border-radius:9px;box-shadow:0 0.5px 1.5px rgba(0,0,0,.35)"></div>
<div class="t" style="left:999.5px;top:704.4px;font-size:26.7px;line-height:26.7px;font-family:'Liberation Sans', sans-serif;font-weight:400;color:#1b1b1b;transform:scaleX(0.9804);transform-origin:0 0;-webkit-text-stroke:0.4px #1b1b1b;">Find out more</div>
<div class="r" style="left:0px;top:1821px;width:2494px;height:2px;background:#2f3033;border-radius:0px;"></div>
<div class="r" style="left:0px;top:1823px;width:2494px;height:67px;background:#050505;border-radius:0px;"></div>
<div class="r" style="left:12px;top:1832px;width:136px;height:49px;background:#444857;border-radius:6px;"></div>
<div class="t" style="left:29.3px;top:1841.6px;font-size:29.3px;line-height:29.3px;font-family:'Liberation Sans', sans-serif;font-weight:400;color:#fff;transform:scaleX(0.9237);transform-origin:0 0;-webkit-text-stroke:0.4px #fff;">Console</div>
<div class="r" style="left:157px;top:1832px;width:117px;height:49px;background:#444857;border-radius:6px;"></div>
<div class="t" style="left:175.0px;top:1841.6px;font-size:29.3px;line-height:29.3px;font-family:'Liberation Sans', sans-serif;font-weight:400;color:#fff;transform:scaleX(0.9019);transform-origin:0 0;-webkit-text-stroke:0.4px #fff;">Assets</div>
<div class="r" style="left:283px;top:1832px;width:169px;height:49px;background:#444857;border-radius:6px;"></div>
<div class="t" style="left:301.0px;top:1841.6px;font-size:29.3px;line-height:29.3px;font-family:'Liberation Sans', sans-serif;font-weight:400;color:#fff;transform:scaleX(0.9340);transform-origin:0 0;-webkit-text-stroke:0.4px #fff;">Comments</div>
<div class="r" style="left:462px;top:1832px;width:64px;height:49px;background:#444857;border-radius:6px;"></div>
<svg class="s" style="left:470px;top:1832px;" width="48" height="48" viewBox="470 1832 48 48"><g fill="none" stroke="#fff" stroke-width="2.9"><path d="M490.2 1849.2 L490.2 1861.8 M496.8 1849.2 L496.8 1861.8 M487.2 1852.2 L499.8 1852.2 M487.2 1858.8 L499.8 1858.8"/><circle cx="487.2" cy="1849.2" r="3"/><circle cx="499.8" cy="1849.2" r="3"/><circle cx="487.2" cy="1861.8" r="3"/><circle cx="499.8" cy="1861.8" r="3"/></g></svg>
<div class="t" style="left:1334.0px;top:1841.2px;font-size:29.3px;line-height:29.3px;font-family:'Liberation Sans', sans-serif;font-weight:400;color:#c6c8cf;transform:scaleX(0.8800);transform-origin:0 0;-webkit-text-stroke:0.4px #c6c8cf;">Last saved</div>
<div class="r" style="left:1518px;top:1831px;width:60px;height:51px;background:#444857;border-radius:6px;"></div>
<svg class="s" style="left:1532px;top:1840px;" width="32" height="32" viewBox="0 0 32 32"><path d="M14 7.5 L7 7.5 Q5 7.5 5 9.5 L5 25 Q5 27 7 27 L22.5 27 Q24.5 27 24.5 25 L24.5 18" fill="none" stroke="#fff" stroke-width="3"/><path d="M15 17 L26.5 5.5 M18.5 5 L27 5 L27 13.5" fill="none" stroke="#fff" stroke-width="3" stroke-linecap="butt"/></svg>
<div class="r" style="left:1587px;top:1831px;width:119px;height:51px;background:#444857;border-radius:6px;"></div>
<div class="t" style="left:1605.7px;top:1841.6px;font-size:29.3px;line-height:29.3px;font-family:'Liberation Sans', sans-serif;font-weight:400;color:#fff;transform:scaleX(0.9540);transform-origin:0 0;-webkit-text-stroke:0.4px #fff;">Delete</div>
<div class="r" style="left:1715px;top:1831px;width:249px;height:51px;background:#444857;border-radius:6px;"></div>
<div class="t" style="left:1733.0px;top:1841.6px;font-size:29.3px;line-height:29.3px;font-family:'Liberation Sans', sans-serif;font-weight:400;color:#fff;transform:scaleX(0.9561);transform-origin:0 0;-webkit-text-stroke:0.4px #fff;">Add to Collection</div>
<div class="r" style="left:1973px;top:1831px;width:125px;height:51px;background:#444857;border-radius:6px;"></div>
<div class="t" style="left:2024.8px;top:1841.6px;font-size:29.3px;line-height:29.3px;font-family:'Liberation Sans', sans-serif;font-weight:400;color:#fff;transform:scaleX(0.9317);transform-origin:0 0;-webkit-text-stroke:0.4px #fff;">Fork</div>
<div class="r" style="left:2107px;top:1831px;width:122px;height:51px;background:#444857;border-radius:6px;"></div>
<div class="t" style="left:2126.0px;top:1841.6px;font-size:29.3px;line-height:29.3px;font-family:'Liberation Sans', sans-serif;font-weight:400;color:#fff;transform:scaleX(0.9016);transform-origin:0 0;-webkit-text-stroke:0.4px #fff;">Embed</div>
<div class="r" style="left:2238px;top:1831px;width:119px;height:51px;background:#444857;border-radius:6px;"></div>
<div class="t" style="left:2257.0px;top:1841.6px;font-size:29.3px;line-height:29.3px;font-family:'Liberation Sans', sans-serif;font-weight:400;color:#fff;transform:scaleX(0.9589);transform-origin:0 0;-webkit-text-stroke:0.4px #fff;">Export</div>
<div class="r" style="left:2367px;top:1831px;width:106px;height:51px;background:#444857;border-radius:6px;"></div>
<div class="t" style="left:2384.5px;top:1841.6px;font-size:29.3px;line-height:29.3px;font-family:'Liberation Sans', sans-serif;font-weight:400;color:#fff;transform:scaleX(0.8953);transform-origin:0 0;-webkit-text-stroke:0.4px #fff;">Share</div>
<svg class="s" style="left:1985px;top:1838px;" width="34" height="34" viewBox="1985 1838 34 34"><g fill="none" stroke="#fff" stroke-width="3.8"><path d="M1992 1849.3 L1998.6 1849.3 Q2001.2 1849.3 2003 1851.8 L2008.2 1859.6 Q2010.3 1862.6 2012 1863.2"/><path d="M2001.5 1849.3 L2011 1849.3"/></g><g fill="#fff"><rect x="2008" y="1845.7" width="7.5" height="7.3" rx="3.4"/><rect x="2008" y="1860" width="7.5" height="7.3" rx="3.4"/></g></svg>
</div></body></html>
